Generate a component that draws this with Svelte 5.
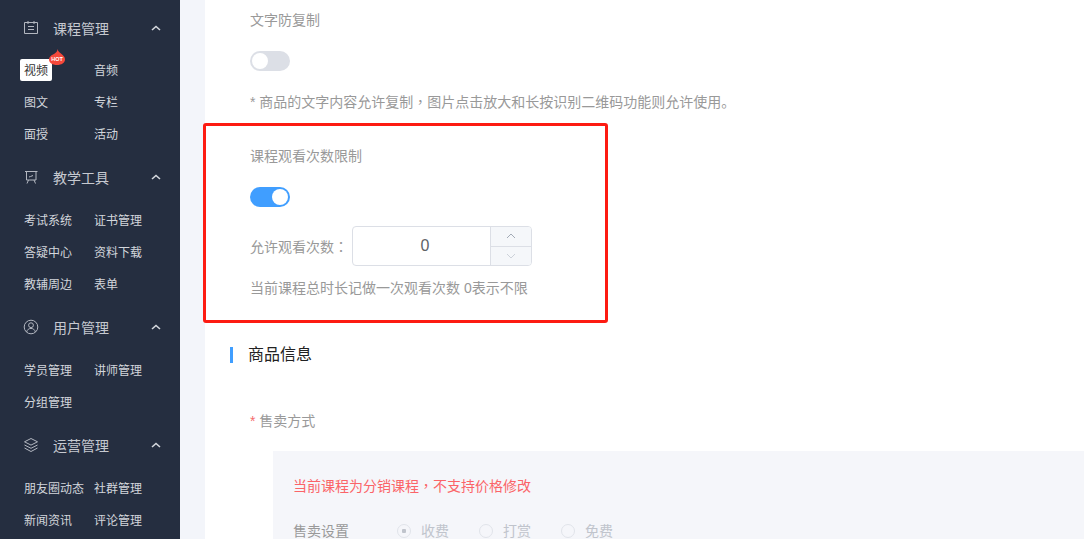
<script lang="ts">
	const groups = [
		{ title: '课程管理', icon: 'course', items: ['视频', '音频', '图文', '专栏', '面授', '活动'] },
		{ title: '教学工具', icon: 'tool', items: ['考试系统', '证书管理', '答疑中心', '资料下载', '教辅周边', '表单'] },
		{ title: '用户管理', icon: 'user', items: ['学员管理', '讲师管理', '分组管理'] },
		{ title: '运营管理', icon: 'layers', items: ['朋友圈动态', '社群管理', '新闻资讯', '评论管理'] }
	];
	const saleTypes = ['收费', '打赏', '免费'];
</script>

<div class="page">
	<aside>
		{#each groups as group}
			<section class="group">
				<div class="group-head">
					<svg class="icon" viewBox="0 0 16 16" fill="none" stroke="currentColor" stroke-width="1">
						{#if group.icon === 'course'}
							<path d="M1.500 2.500h13v11h-13zM5 1v3M11 1v3M5 6.500h6M5 9.500h6" />
						{:else if group.icon === 'tool'}
							<path d="M2 2.500h12.500M3.500 2.500v8.500h9.500V2.500M5.500 11 4 14.500M11 11l1.500 3.500M6 8l1.500-.5 2.500-1" />
						{:else if group.icon === 'user'}
							<circle cx="8" cy="8" r="6.800" />
							<circle cx="8" cy="6.200" r="2.400" />
							<path d="M3.600 13c.6-2.400 2.400-3.600 4.400-3.600s3.800 1.200 4.400 3.600" />
						{:else}
							<path d="M8 1.500 14.500 4.800 8 8.100 1.500 4.800zM1.500 8 8 11.300 14.500 8M1.500 11 8 14.500 14.500 11" />
						{/if}
					</svg>
					<span class="group-title">{group.title}</span>
					<svg class="caret" viewBox="0 0 10 6" fill="none" stroke="currentColor" stroke-width="1.600">
						<path d="M1 5 5 1.500 9 5" />
					</svg>
				</div>
				<div class="items">
					{#each group.items as item}
						<div class="item">
							<span class:active={item === '视频'}>{item}</span>
							{#if item === '视频'}
								<svg class="hot" viewBox="0 0 16 16">
									<path d="M8.500 0C9 2.500 11 3.500 12.500 5 14.500 6.500 16 8 16 10.500 16 13.800 12.500 16 8 16S0 13.800 0 10.500C0 8 2 6.500 4 5.500 6.500 4 8.500 3 8.500 0z" fill="#f5483b" />
									<text x="8" y="12.300" text-anchor="middle">HOT</text>
								</svg>
							{/if}
						</div>
					{/each}
				</div>
			</section>
		{/each}
	</aside>

	<main>
		<div class="field first">
			<div class="label">文字防复制</div>
			<div class="switch"><i></i></div>
			<p class="hint">* 商品的文字内容允许复制<span class="punct">，</span>图片点击放大和长按识别二维码功能则允许使用。</p>
		</div>

		<div class="field limit">
			<div class="label">课程观看次数限制</div>
			<div class="switch on"><i></i></div>
			<div class="count-row">
				<span class="count-label">允许观看次数<span class="punct">：</span></span>
				<div class="number">
					<span class="value">0</span>
					<div class="steps">
						<span>
							<svg viewBox="0 0 10 6" fill="none" stroke="#8d95a5" stroke-width="0.800"><path d="M1 5 5 1 9 5" /></svg>
						</span>
						<span>
							<svg viewBox="0 0 10 6" fill="none" stroke="#c3c8d2" stroke-width="0.800"><path d="M1 1 5 5 9 1" /></svg>
						</span>
					</div>
				</div>
			</div>
			<p class="hint note">当前课程总时长记做一次观看次数 0表示不限</p>
		</div>

		<h2>商品信息</h2>

		<div class="label sale"><em>*</em> 售卖方式</div>
		<div class="panel">
			<p class="warn">当前课程为分销课程<span class="punct">，</span>不支持价格修改</p>
			<div class="sale-row">
				<span class="sale-label">售卖设置</span>
				{#each saleTypes as type, i}
					<span class="radio" class:checked={i === 0}><i></i>{type}</span>
				{/each}
			</div>
		</div>

		<div class="annotation"></div>
	</main>
</div>

<style>
	:global(body) {
		margin: 0;
		font-family: 'Liberation Sans', 'Noto Sans CJK SC', sans-serif;
		background: #f3f5fa;
	}
	.page {
		display: flex;
		height: 539px;
		overflow: hidden;
	}
	aside {
		width: 180px;
		flex-shrink: 0;
		background: #252e40;
		padding-top: 17px;
		box-sizing: border-box;
	}
	.group {
		margin-bottom: 25px;
	}
	.group-head {
		display: flex;
		align-items: center;
		height: 22px;
		color: #c6c9d0;
		padding-left: 23px;
	}
	.icon {
		width: 16px;
		height: 16px;
		color: #b3b7c0;
		margin-right: 14px;
	}
	.group-title {
		font-size: 14px;
		width: 98px;
	}
	.caret {
		width: 10px;
		height: 6px;
		color: #d5d8de;
	}
	.items {
		display: grid;
		grid-template-columns: 70px 70px;
		grid-auto-rows: 32px;
		padding: 15px 0 0 24px;
		margin-bottom: -8px;
	}
	.group:first-child .items {
		padding-top: 14px;
	}
	.item {
		position: relative;
		display: flex;
		align-items: center;
		font-size: 12px;
		line-height: 24px;
		color: #d3d6dc;
		white-space: nowrap;
	}
	.item span {
		position: relative;
		top: 2px;
	}
	.item .active {
		top: 1px;
		height: 22px;
		background: #fff;
		color: #333;
		margin-left: -4px;
		padding: 0 4px;
		border-radius: 2px;
	}
	.hot {
		position: absolute;
		left: 25px;
		top: -4px;
		width: 16px;
		height: 16px;
	}
	.hot text {
		font: bold 5.500px 'Liberation Sans', sans-serif;
		fill: #fff;
	}
	main {
		position: relative;
		flex: 1;
		margin-left: 25px;
		background: #fff;
		padding-left: 45px;
		min-width: 0;
	}
	.field.first {
		padding-top: 10px;
	}
	.label {
		font-size: 14px;
		line-height: 20px;
		color: #999;
	}
	.switch {
		position: relative;
		width: 40px;
		height: 20px;
		margin-top: 21px;
		border-radius: 10px;
		background: #dcdfe6;
	}
	.switch i {
		position: absolute;
		left: 2px;
		top: 2px;
		width: 16px;
		height: 16px;
		border-radius: 50%;
		background: #fff;
	}
	.switch.on {
		background: #409eff;
	}
	.switch.on i {
		left: 22px;
	}
	.hint {
		margin: 20px 0 0;
		font-size: 14px;
		line-height: 20px;
		color: #999;
	}
	.punct {
		font-family: 'Noto Sans CJK TC', sans-serif;
	}
	.limit {
		padding-top: 34px;
	}
	.count-row {
		display: flex;
		align-items: center;
		margin-top: 19px;
	}
	.count-label {
		width: 102px;
		font-size: 14px;
		color: #999;
		white-space: nowrap;
	}
	.number {
		display: flex;
		width: 180px;
		height: 40px;
		box-sizing: border-box;
		border: 1px solid #dcdfe6;
		border-radius: 4px;
		overflow: hidden;
	}
	.value {
		flex: 1;
		padding-left: 7px;
		text-align: center;
		font-size: 16px;
		line-height: 38px;
		color: #606266;
	}
	.steps {
		width: 40px;
		display: flex;
		flex-direction: column;
		border-left: 1px solid #dcdfe6;
		background: #f5f7fa;
	}
	.steps span {
		flex: 1;
		display: flex;
		align-items: center;
		justify-content: center;
	}
	.steps span + span {
		border-top: 1px solid #dcdfe6;
	}
	.steps svg {
		width: 10px;
		height: 6px;
	}
	.note {
		margin-top: 12px;
	}
	h2 {
		margin: 49px 0 0 -20px;
		padding-left: 15px;
		border-left: 3px solid #409eff;
		font-size: 16px;
		font-weight: 400;
		line-height: 16px;
		color: #222;
	}
	.sale {
		margin-top: 48px;
	}
	.sale em {
		font-style: normal;
		color: #f56c6c;
	}
	.panel {
		margin: 20px 0 0 23px;
		padding: 24px 20px 0;
		height: 120px;
		background: #f5f6fa;
	}
	.warn {
		margin: 0;
		font-size: 14px;
		line-height: 20px;
		color: #fb6468;
	}
	.sale-row {
		display: flex;
		align-items: center;
		margin-top: 25px;
		font-size: 14px;
		line-height: 20px;
		color: #999;
	}
	.sale-label {
		width: 104px;
	}
	.radio {
		display: flex;
		align-items: center;
		width: 82px;
		color: #c0c4cc;
	}
	.radio i {
		box-sizing: border-box;
		width: 14px;
		height: 14px;
		margin-right: 10px;
		border: 1px solid #e1e4ea;
		border-radius: 50%;
		background: #f5f6fa;
	}
	.radio.checked i {
		background: radial-gradient(circle, #c0c4cc 2px, #f5f6fa 2.500px);
	}
	.annotation {
		position: absolute;
		left: -2px;
		top: 123px;
		width: 405px;
		height: 200px;
		box-sizing: border-box;
		border: 3px solid #fd1b12;
		border-radius: 3px;
	}
</style>
